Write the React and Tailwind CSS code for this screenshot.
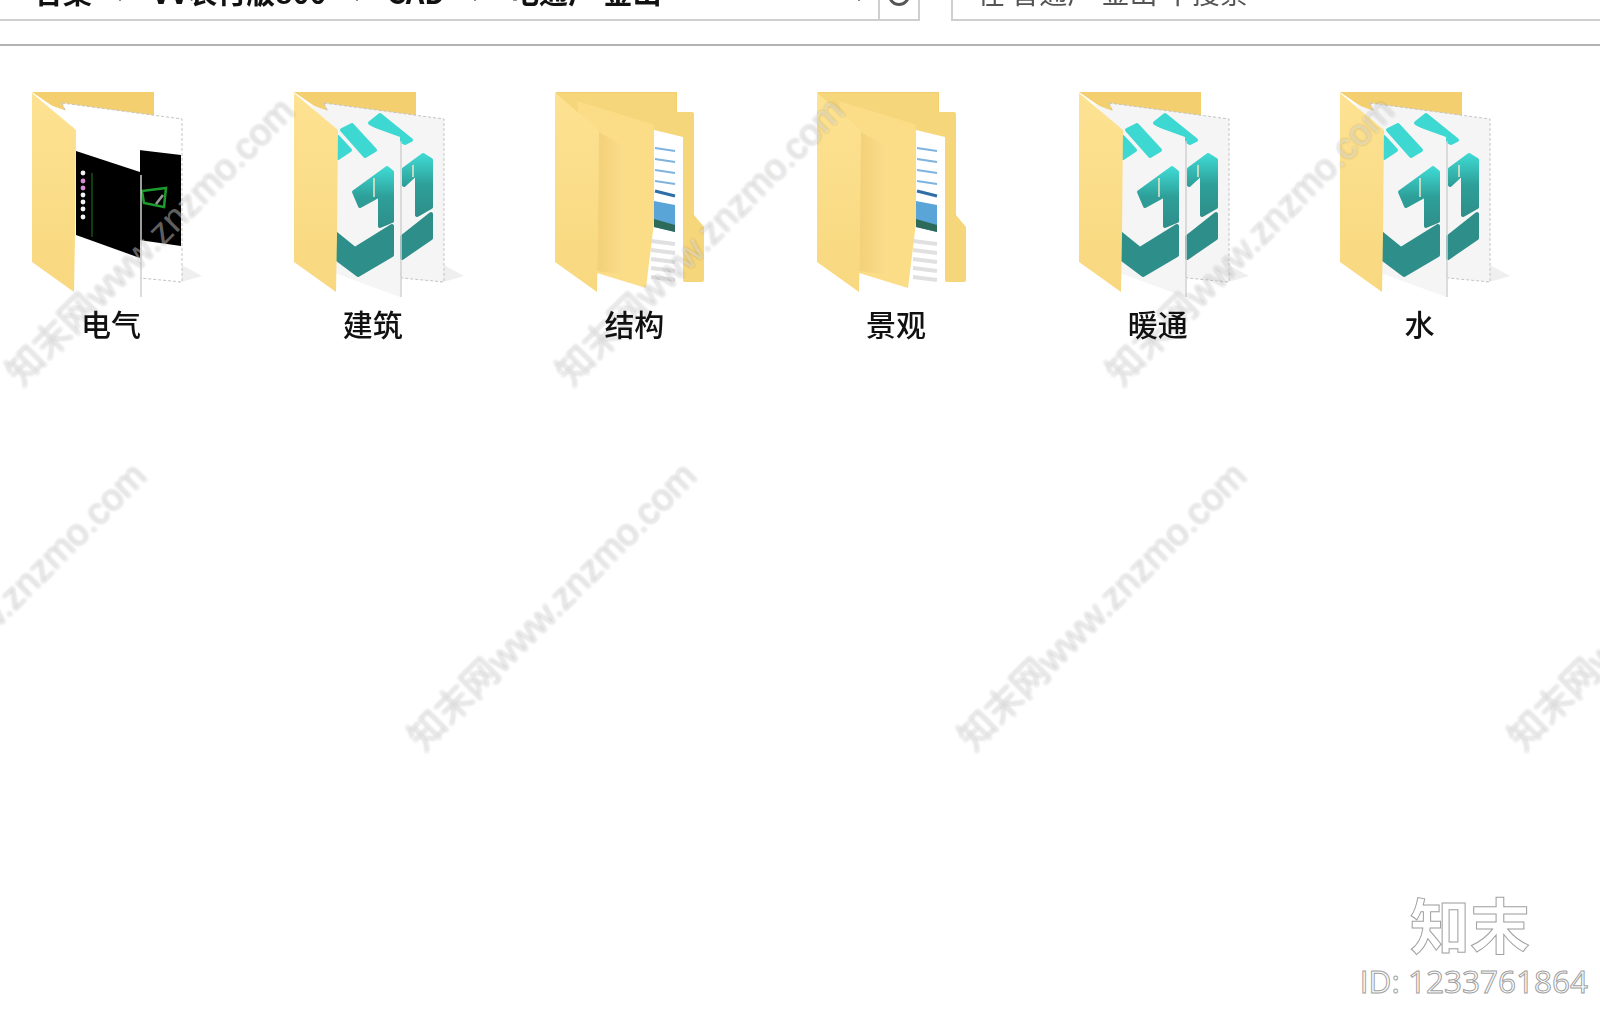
import React from "react";

const CJK = "font-['Noto_Sans_CJK_SC','Noto_Sans',sans-serif]";

const FOLDERS = [
  { name: "电气", kind: "drawing" },
  { name: "建筑", kind: "logo" },
  { name: "结构", kind: "docs" },
  { name: "景观", kind: "docs" },
  { name: "暖通", kind: "logo" },
  { name: "水", kind: "logo" },
];

// x / y of the lower left end of every watermark line
const MARKS = [
  [26, 392], [576, 392], [1126, 392],
  [-122, 757], [428, 757], [978, 757], [1528, 757],
];

const Flap = ({ id }) => (
  <>
    <defs>
      <linearGradient id={id} x1="0" y1="0" x2="0" y2="1">
        <stop offset="0" stopColor="#fde292" />
        <stop offset="1" stopColor="#f8d87f" />
      </linearGradient>
    </defs>
    <path d="M12 8 L56 45 L55 150 L54 207 L12 177 Z" fill={`url(#${id})`} />
  </>
);

const Back = () => <path d="M12 7 H134 V32 L60 40 Z" fill="#f3cf6f" />;

const Shadow = () => <path d="M158 178 L182 191 L158 198 Z" fill="#efefef" />;

const Drawing = () => (
  <>
    <Shadow />
    <path d="M42 18 L162 34 V197 L120 193 Z" fill="#fff" stroke="#c4c4c4" strokeDasharray="3 2" />
    <path d="M119 65 L161 70 V161 L119 155 Z" fill="#000" />
    <path d="M122 106 L146 103 L144 122 L124 118 Z" fill="none" stroke="#1c9a2c" strokeWidth="2.5" />
    <path d="M136 119 L143 110" stroke="#999" strokeWidth="2.5" />
    <path d="M27 19 L120 52 V212 L56 187 V45 Z" fill="#fff" />
    <path d="M121 90 V212" stroke="#d0d0d0" strokeWidth="1.5" />
    <path d="M56 66 L120 87 V173 L56 150 Z" fill="#000" />
    <path d="M72 88 V152" stroke="#1f7a1f" strokeWidth="1" />
    {[88, 96, 103, 110, 117, 124, 132].map((y, i) => (
      <circle key={y} cx="63" cy={y} r="2.4" fill={i === 1 || i === 2 ? "#d88bd8" : "#f2f2f2"} />
    ))}
  </>
);

const Logo = ({ id }) => (
  <>
    <defs>
      <linearGradient id={id} x1="0" y1="0" x2="0" y2="1">
        <stop offset="0" stopColor="#3fd8d2" />
        <stop offset="0.5" stopColor="#2e9f99" />
        <stop offset="1" stopColor="#2e8f8a" />
      </linearGradient>
    </defs>
    <Shadow />
    <path d="M42 18 L162 34 V197 L120 193 Z" fill="#f5f5f5" stroke="#c4c4c4" strokeDasharray="3 2" />
    <g strokeLinejoin="round" strokeWidth="4">
      <path d="M88 38 L98 30 L129 55 L123 58 Z" fill="#3ed8d2" stroke="#3ed8d2" />
      <path d="M122 84 L141 70 L149 75 V122 L135 130 V88 L122 100 Z" fill={`url(#${id})`} stroke={`url(#${id})`} />
      <path d="M120 152 L149 129 V153 L120 173 Z" fill="#2e8f8a" stroke="#2e8f8a" />
    </g>
    <path d="M27 19 L118 52 V212 L50 187 V45 Z" fill="#f5f5f5" />
    <path d="M119 56 V212" stroke="#d0d0d0" strokeWidth="1.5" />
    <g strokeLinejoin="round" strokeWidth="4">
      <path d="M70 40 L93 65 L83 71 L60 45 Z" fill="#3ed8d2" stroke="#3ed8d2" />
      <path d="M56 52 L68 65 L56 73 Z" fill="#3ed8d2" stroke="#3ed8d2" />
      <path d="M72 107 L105 83 L110 87 V136 L98 141 V110 L78 121 Z" fill={`url(#${id})`} stroke={`url(#${id})`} />
      <path d="M52 147 L73 164 L110 141 V170 L76 190 L52 172 Z" fill="#2e8f8a" stroke="#2e8f8a" />
    </g>
    <path d="M92 93 V112" stroke="#f0e6c8" strokeWidth="1.5" />
    <path d="M131 80 V92" stroke="#f0e6c8" strokeWidth="1.5" />
  </>
);

const Docs = ({ id }) => (
  <>
    <defs>
      <linearGradient id={id} x1="0" y1="0" x2="1" y2="0">
        <stop offset="0" stopColor="#f3d079" />
        <stop offset="1" stopColor="#fbdd8a" />
      </linearGradient>
    </defs>
    <path d="M12 8 H131 Q133 8 133 10 V27 H149 Q151 27 151 30 V130 L161 142 V195 Q161 197 159 197 H141 L60 60 Z" fill="#f6d67a" />
    <path d="M111 45 L140 52 V202 L104 204 Z" fill="#fff" />
    {[63, 74, 85, 96].map((y) => (
      <path key={y} d={`M112 ${y} L132 ${y + 3}`} stroke="#7db3de" strokeWidth="2" />
    ))}
    <path d="M112 106 L132 111" stroke="#2f6fa8" strokeWidth="3" />
    <path d="M111 116 L132 120 V147 L111 142 Z" fill="#5aa5d8" />
    <path d="M111 134 L132 140 V147 L111 142 Z" fill="#2e6a5a" />
    {[156, 165, 174, 183, 192].map((y) => (
      <path key={y} d={`M108 ${y} L132 ${y + 3}`} stroke="#e0e0e0" strokeWidth="4" />
    ))}
    <path d="M34 16 L109 39 Q111 40 111 43 V138 L103 203 L54 188 Z" fill="#fbdc87" />
    <path d="M54 46 L82 62 V190 L54 186 Z" fill={`url(#${id})`} />
  </>
);

const FolderIcon = ({ kind, idx }) => (
  <svg viewBox="0 0 192 215" className="h-[215px] w-[192px] shrink-0 blur-[0.6px]">
    <Back />
    {kind === "drawing" && <Drawing />}
    {kind === "logo" && <Logo id={`teal${idx}`} />}
    {kind === "docs" && <Docs id={`inner${idx}`} />}
    <Flap id={`flap${idx}`} />
  </svg>
);

const Crumb = ({ children, className = "" }) => (
  <span className={`whitespace-nowrap ${className}`}>{children}</span>
);

const Sep = ({ className = "" }) => <span className={`mb-[5px] h-[3px] w-[2px] shrink-0 bg-[#888] ${className}`} />;

export default function App() {
  return (
    <div className={`relative h-[1022px] w-full overflow-hidden bg-white ${CJK}`}>
      <div className="flex h-[46px] items-start border-b-2 border-[#b4b4b4]">
        <div className="flex h-[21px] w-[878px] items-end overflow-hidden border-b-2 border-[#cfcfcf]">
          <div className="flex h-[21px] w-full -translate-y-[13px] items-end pl-[34px] text-[29px] leading-none font-bold text-[#111] blur-[0.5px]">
            <Crumb>合集</Crumb>
            <Sep className="mr-[31px] ml-[27px]" />
            <Crumb>VV表付版800</Crumb>
            <Sep className="mx-[29px]" />
            <Crumb>CAD</Crumb>
            <Sep className="mr-[34px] ml-[29px]" />
            <Crumb>电通厂 金山</Crumb>
            <Sep className="mr-[18px] ml-auto" />
          </div>
        </div>
        <div className="flex h-[21px] w-[42px] items-end justify-center overflow-hidden border-x-2 border-b-2 border-[#cfcfcf]">
          <div className="mb-[13px] h-[22px] w-[22px] shrink-0 rounded-full border-[3px] border-[#555] blur-[0.5px]" />
        </div>
        <div className="ml-[31px] flex h-[21px] flex-1 items-end overflow-hidden border-b-2 border-l-2 border-[#cfcfcf]">
          <span className="ml-[24px] -translate-y-[13px] whitespace-nowrap text-[28px] leading-none text-[#555] blur-[0.5px]">
            在 智通厂 金山 中搜索
          </span>
        </div>
      </div>

      <div className="flex pt-[39px] pl-[20px]">
        {FOLDERS.map((f, i) => (
          <div key={i} className="flex w-[261.7px] shrink-0 flex-col">
            <FolderIcon kind={f.kind} idx={i} />
            <div className="relative z-10 mt-[5px] w-[182px] text-center text-[30px] leading-[36px] font-medium text-[#111] blur-[0.5px]">
              {f.name}
            </div>
          </div>
        ))}
      </div>

      {MARKS.map(([x, y]) => (
        <div
          key={`${x}-${y}`}
          style={{ left: x, top: y }}
          className="pointer-events-none absolute origin-[0_100%] -rotate-45 font-['Liberation_Sans','Noto_Sans_CJK_SC',sans-serif] text-[37px] leading-none whitespace-nowrap text-white/40 [text-shadow:0_0_3px_rgba(0,0,0,0.22)]"
        >
          <span className="absolute bottom-0 left-0">知末网www.znzmo.com</span>
        </div>
      ))}

      <div className="absolute right-[12px] bottom-[21px] flex flex-col items-end text-transparent [-webkit-text-stroke:1px_#a0a0a0]">
        <div className="mr-[58px] mb-[2px] text-[60px] leading-[72px] font-bold">知末</div>
        <div className="font-['Open_Sans',sans-serif] text-[31.5px] leading-[40px]">ID: 1233761864</div>
      </div>
    </div>
  );
}
